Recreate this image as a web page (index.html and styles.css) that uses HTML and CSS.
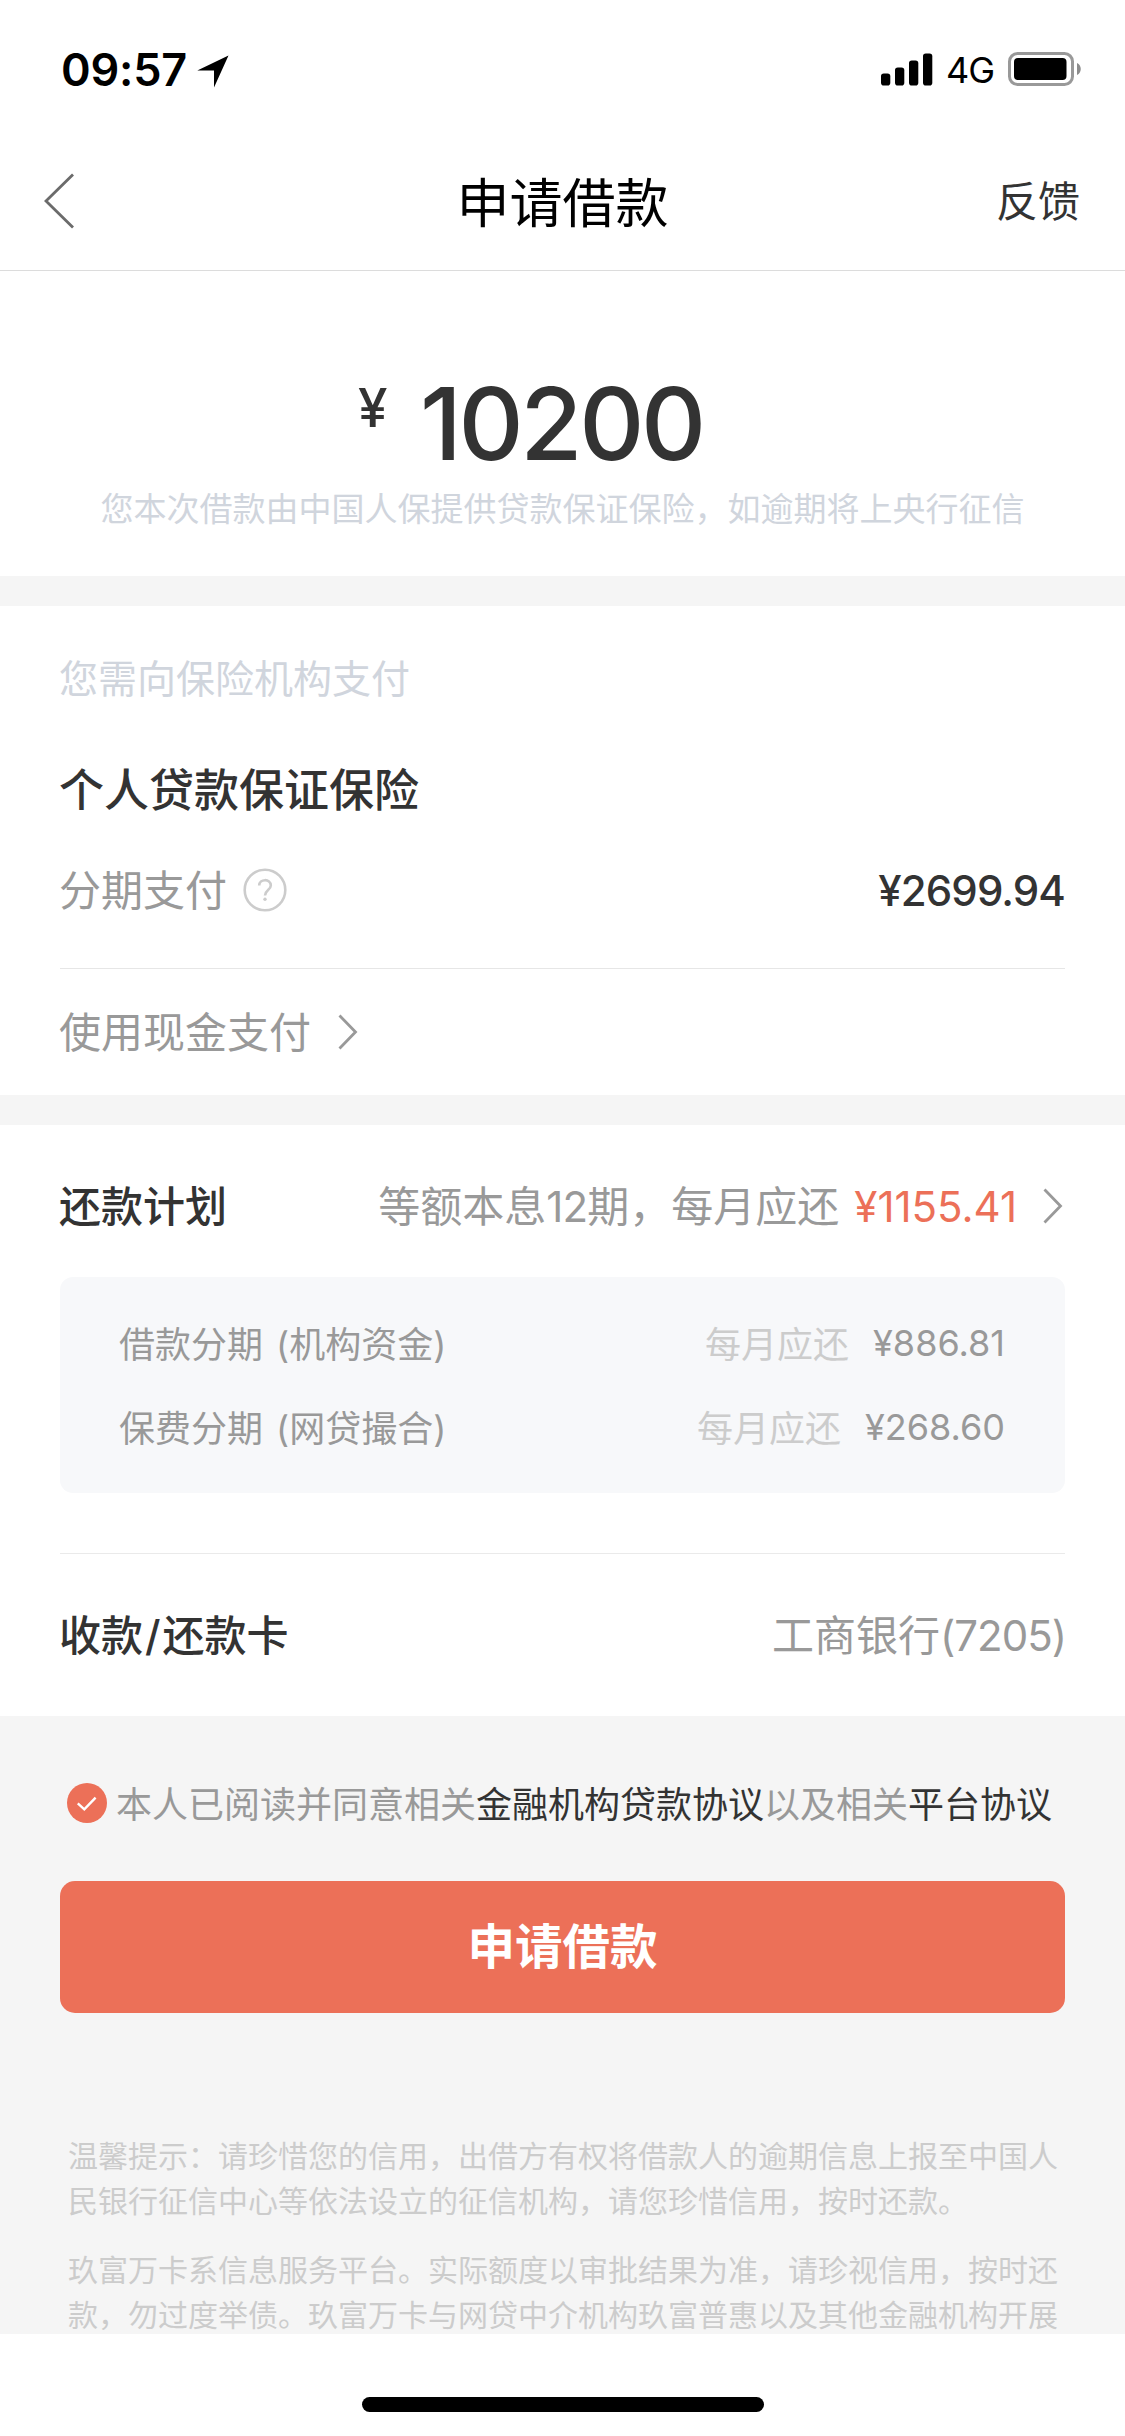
FILE: index.html
```html
<!DOCTYPE html>
<html lang="zh-CN">
<head>
<meta charset="UTF-8">
<title>申请借款</title>
<link rel="stylesheet" href="styles.css">
</head>
<body>
<div class="status">
  <div class="status-left">
    <span class="time">09:57</span>
    <svg class="locate" width="32" height="33" viewBox="0 0 32 33"><path d="M31.5 .5 17 32.5V15.5H.3Z" fill="#000"/></svg>
  </div>
  <div class="status-right">
    <svg width="52" height="33" viewBox="0 0 52 33"><rect x="0" y="20.5" width="9.3" height="12" rx="2.8"/><rect x="14" y="14.5" width="9.3" height="18" rx="2.8"/><rect x="28" y="7.5" width="9.3" height="25" rx="2.8"/><rect x="42" y=".5" width="9.3" height="32" rx="2.8"/></svg>
    <span class="net">4G</span>
    <svg class="battery" width="74" height="34" viewBox="0 0 74 34"><rect x="1.5" y="1.5" width="63" height="31" rx="8" fill="none" stroke="#999" stroke-width="3"/><rect x="6" y="6" width="52.5" height="22" rx="4"/><path d="M69 11c5 2 5 10 0 12Z" fill="#8c8c8c"/></svg>
  </div>
</div>
<header class="nav">
  <svg class="back" width="32" height="56" viewBox="0 0 32 56"><path d="M30 1.5 3 28 30 54.5" fill="none" stroke="#6b6b6b" stroke-width="2.8"/></svg>
  <h1 class="nav-title">申请借款</h1>
  <span class="feedback">反馈</span>
</header>
<main class="content">
  <section class="hero">
    <div class="sum"><span class="sum-sign">¥</span><span class="sum-num">10200</span></div>
    <p class="sum-note">您本次借款由中国人保提供贷款保证保险，如逾期将上央行征信</p>
  </section>
  <section class="insure">
    <p class="insure-label">您需向保险机构支付</p>
    <h2 class="insure-title">个人贷款保证保险</h2>
    <div class="row insure-row">
      <span class="with-icon"><span class="lift">分期支付</span>
        <svg width="44" height="44" viewBox="0 0 44 44" fill="none" stroke="#ccc"><circle cx="22" cy="22" r="20.3" stroke-width="2.6"/><path d="M16.2 17.6c0-7.2 11.6-7.2 11.6-.2 0 4.6-5.8 4.8-5.8 10.2" stroke-width="2.6"/><circle cx="22" cy="31.3" r="1.7" fill="#ccc" stroke="none"/></svg>
      </span>
      <span class="price">¥2699.94</span>
    </div>
    <div class="cash"><span class="lift">使用现金支付</span>
      <svg class="chev" width="20" height="36" viewBox="0 0 20 36"><path d="M1.5 1.5 17.5 18 1.5 34.5"/></svg>
    </div>
  </section>
  <section class="plan">
    <div class="row plan-head">
      <span class="strong lift">还款计划</span>
      <span class="plan-info"><span class="plan-text lift">等额本息<span class="term">12</span>期，每月应还</span><span class="accent">¥1155.41</span>
        <svg class="chev" width="20" height="36" viewBox="0 0 20 36"><path d="M1.5 1.5 17.5 18 1.5 34.5"/></svg>
      </span>
    </div>
    <div class="parts">
      <div class="row part"><span>借款分期<span class="paren">(机构资金)</span></span><span class="part-due"><span class="pale">每月应还</span><span class="part-num">¥886.81</span></span></div>
      <div class="row part"><span>保费分期<span class="paren">(网贷撮合)</span></span><span class="part-due"><span class="pale">每月应还</span><span class="part-num">¥268.60</span></span></div>
    </div>
    <div class="row bank">
      <span class="strong">收款<span class="slash">/</span>还款卡</span>
      <span class="bank-name">工商银行<span class="card-no">(7205)</span></span>
    </div>
  </section>
  <section class="foot">
    <div class="agree">
      <svg width="40" height="40" viewBox="0 0 40 40"><circle cx="20" cy="20" r="20" fill="#ec7058"/><path d="M10.8 20.3 17.3 26.3 28.6 14.6" fill="none" stroke="#fff" stroke-width="2.4"/></svg>
      <span class="agree-text">本人已阅读并同意相关<a>金融机构贷款协议</a>以及相关<a>平台协议</a></span>
    </div>
    <button class="apply">申请借款</button>
    <div class="tips">
      <p>温馨提示：请珍惜您的信用，出借方有权将借款人的逾期信息上报至中国人<br>民银行征信中心等依法设立的征信机构，请您珍惜信用，按时还款。</p>
      <p>玖富万卡系信息服务平台。实际额度以审批结果为准，请珍视信用，按时还<br>款，勿过度举债。玖富万卡与网贷中介机构玖富普惠以及其他金融机构开展</p>
    </div>
  </section>
</main>
<div class="home"><div class="home-bar"></div></div>
</body>
</html>
```
FILE: styles.css
```css
* { box-sizing: border-box; margin: 0; padding: 0; }

body {
  width: 1125px;
  height: 2436px;
  display: flex;
  flex-direction: column;
  overflow: hidden;
  background: #fff;
  color: #999;
  font-family: Inter, "Noto Sans CJK SC", sans-serif;
  font-size: 42px;
  font-weight: 400;
}

svg { display: block; flex: none; }
p, span, h1, h2 { white-space: nowrap; }

.status {
  height: 132px;
  padding: 0 43px 0 61px;
  display: flex;
  justify-content: space-between;
  align-items: flex-start;
  color: #000;
}
.status-left, .status-right { display: flex; align-items: center; height: 138px; }
.time { font-size: 45px; font-weight: 600; letter-spacing: -.2px; width: 136px; }
.locate { margin-top: 5px; }
.net { font-size: 36px; font-weight: 400; margin: 2px 0 0 13px; width: 62px; letter-spacing: -1px; }

.nav {
  height: 139px;
  padding: 0 45px 0 43px;
  display: grid;
  grid-template-columns: 1fr auto 1fr;
  align-items: center;
  border-bottom: 1px solid #dcdcdc;
}
.nav-title { padding: 5px 0 0 2px; font-size: 53px; font-weight: 400; line-height: 80px; color: #000; }
.feedback { justify-self: end; padding-top: 2px; color: #333; line-height: 64px; }

.content { height: 2063px; overflow: hidden; background: #f5f5f5; }
.hero, .insure, .plan { background: #fff; }

.hero { height: 305px; padding-top: 91px; }
.sum { display: flex; height: 123px; padding-left: 358px; color: #333; font-weight: 500; }
.sum-sign { width: 62px; font-size: 53px; line-height: 93px; }
.sum-num { font-size: 101px; line-height: 122px; letter-spacing: -3.4px; }
.sum-note { text-align: center; font-size: 33px; line-height: 48px; color: #d0d5dd; }

.insure { height: 489px; margin-top: 30px; padding: 44px 60px 0 59px; }
.insure-label { font-size: 39px; line-height: 58px; color: #d0d5dd; }
.insure-title { margin-top: 50px; font-size: 45px; font-weight: 500; line-height: 66px; color: #333; }
.row { display: flex; justify-content: space-between; align-items: center; }
.insure-row { height: 145px; margin-left: 1px; border-bottom: 1px solid #e6e6e6; padding-bottom: 12px; }
.with-icon { display: flex; align-items: center; gap: 16px; margin-left: -1px; }
.lift { margin-top: -5px; }
.price { color: #333; font-weight: 500; letter-spacing: -.9px; }
.cash { display: flex; align-items: center; gap: 27px; height: 126px; }
.chev path { fill: none; stroke: #999; stroke-width: 2.8; }

.plan { height: 591px; margin-top: 30px; padding: 0 60px; }
.plan-head { height: 152px; padding-top: 10px; }
.strong { margin-left: -1px; color: #333; font-weight: 500; }
.plan-info { display: flex; align-items: center; padding-right: 2px; }
.term { letter-spacing: -.8px; }
.accent { margin: 0 26px 0 15px; color: #ec7058; }
.parts {
  height: 216px;
  padding: 24px 60px 24px 59px;
  border-radius: 13px;
  background: #f7f8fa;
  font-size: 36px;
}
.part { height: 84px; padding-bottom: 3px; }
.paren { margin-left: 13px; }
.part-due { display: flex; align-items: center; }
.part-num { padding-top: 3px; }
.pale { color: #ccc; margin-right: 24px; }
.bank { height: 162px; margin-top: 60px; padding-bottom: 5px; border-top: 1px solid #eaeaea; }
.slash { margin: 0 2px; }
.bank-name { margin-right: -1px; }
.card-no { letter-spacing: -1px; }

.foot { padding: 0 60px; }
.agree {
  height: 165px;
  padding: 9px 0 0 7px;
  display: flex;
  align-items: center;
  gap: 9px;
  font-size: 36px;
}
.agree-text { margin-top: -3px; }
.agree a { color: #333; }
.apply {
  display: block;
  width: 100%;
  height: 132px;
  border: 0;
  border-radius: 15px;
  background: #ec7058;
  color: #fff;
  font: 700 47.5px/130px Inter, "Noto Sans CJK SC", sans-serif;
}
.tips { padding: 121px 0 0 8px; font-size: 30px; line-height: 45px; color: #ccc; }
.tips p + p { margin-top: 24px; }

.home { flex: 1; display: flex; justify-content: center; padding-top: 63px; }
.home-bar { width: 402px; height: 15px; border-radius: 8px; background: #000; }
```
